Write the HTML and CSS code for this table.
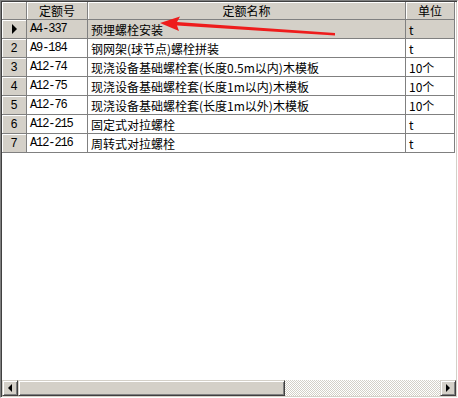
FILE: index.html
```html
<!DOCTYPE html>
<html>
<head>
  <meta charset="UTF-8">
  <title>定额列表</title>
  <link rel="stylesheet" href="styles.css">
</head>
<body>
  <div class="grid">
    <div class="grid-body">
      <table class="quota">
        <colgroup>
          <col class="c-ind">
          <col class="c-code">
          <col class="c-name">
          <col class="c-unit">
        </colgroup>
        <thead>
          <tr>
            <th class="ind"></th>
            <th>定额号</th>
            <th>定额名称</th>
            <th>单位</th>
          </tr>
        </thead>
        <tbody>
          <tr class="current">
            <td class="ind"><span class="pointer"></span></td>
            <td class="code">A4-337</td>
            <td>预埋螺栓安装</td>
            <td>t</td>
          </tr>
          <tr>
            <td class="ind">2</td>
            <td class="code">A9-184</td>
            <td>钢网架(球节点)螺栓拼装</td>
            <td>t</td>
          </tr>
          <tr>
            <td class="ind">3</td>
            <td class="code">A12-74</td>
            <td>现浇设备基础螺栓套(长度0.5m以内)木模板</td>
            <td>10个</td>
          </tr>
          <tr>
            <td class="ind">4</td>
            <td class="code">A12-75</td>
            <td>现浇设备基础螺栓套(长度1m以内)木模板</td>
            <td>10个</td>
          </tr>
          <tr>
            <td class="ind">5</td>
            <td class="code">A12-76</td>
            <td>现浇设备基础螺栓套(长度1m以外)木模板</td>
            <td>10个</td>
          </tr>
          <tr>
            <td class="ind">6</td>
            <td class="code">A12-215</td>
            <td>固定式对拉螺栓</td>
            <td>t</td>
          </tr>
          <tr>
            <td class="ind">7</td>
            <td class="code">A12-216</td>
            <td>周转式对拉螺栓</td>
            <td>t</td>
          </tr>
        </tbody>
      </table>
    </div>
    <div class="hscroll">
      <div class="sb-btn"><span class="tri-left"></span></div>
      <div class="sb-thumb"></div>
      <div class="sb-track"></div>
      <div class="sb-btn"><span class="tri-right"></span></div>
    </div>
  </div>

  <!-- red marker pointing at the current row -->
  <svg class="marker" width="458" height="398" viewBox="0 0 458 398">
    <polygon points="160,23 180,16.5 177,22 335,33 335,35.5 177,25.5 179,31" fill="#ee1c1c"/>
  </svg>
</body>
</html>
```

FILE: styles.css
```css
* {
  margin: 0;
  padding: 0;
  box-sizing: border-box;
}

body {
  width: 458px;
  height: 398px;
  background: #d4d0c8;
  font-family: "Noto Sans CJK SC", sans-serif;
  font-size: 12px;
  color: #000;
  position: relative;
}

.grid {
  width: 458px;
  height: 398px;
  display: flex;
  flex-direction: column;
  border-top: 1px solid #808080;
  border-left: 1px solid #808080;
  border-right: 1px solid #ffffff;
  border-bottom: 1px solid #ffffff;
  box-shadow: inset 1px 1px 0 #404040, inset -1px -1px 0 #d4d0c8;
  padding: 1px;
}

.grid-body {
  flex: 1;
  background: #fff;
  overflow: hidden;
}

.quota {
  border-collapse: separate;
  border-spacing: 0;
  table-layout: fixed;
  width: 453px;
}

.c-ind { width: 25px; }
.c-code { width: 61px; }
.c-name { width: 318px; }
.c-unit { width: 49px; }

.quota th,
.quota td {
  height: 19px;
  padding: 0 3px;
  border-right: 1px solid #808080;
  border-bottom: 1px solid #808080;
  white-space: nowrap;
  overflow: hidden;
  line-height: 17px;
  text-align: left;
  font-weight: normal;
}

.quota th {
  height: 18px;
  background: #d4d0c8;
  text-align: center;
  box-shadow: inset 1px 1px 0 #ffffff;
}

.quota td.ind {
  background: #d4d0c8;
  text-align: center;
  box-shadow: inset 1px 1px 0 #ffffff;
  font-family: "Liberation Sans", sans-serif;
  padding: 0;
}

.quota td.code {
  font-family: "Liberation Mono", monospace;
  letter-spacing: -1.1px;
  padding-left: 3px;
}

.quota tr.current td {
  background: #d4d0c8;
}

.pointer {
  display: inline-block;
  width: 0;
  height: 0;
  border-top: 5px solid transparent;
  border-bottom: 5px solid transparent;
  border-left: 5px solid #000;
  vertical-align: middle;
}

/* horizontal scrollbar */
.hscroll {
  height: 16px;
  display: flex;
}

.sb-btn {
  width: 16px;
  height: 16px;
  background: #d4d0c8;
  border-top: 1px solid #d4d0c8;
  border-left: 1px solid #d4d0c8;
  border-right: 1px solid #404040;
  border-bottom: 1px solid #404040;
  box-shadow: inset 1px 1px 0 #ffffff, inset -1px -1px 0 #808080;
  display: flex;
  align-items: center;
  justify-content: center;
}

.tri-left {
  border-top: 4px solid transparent;
  border-bottom: 4px solid transparent;
  border-right: 4px solid #000;
}

.tri-right {
  border-top: 4px solid transparent;
  border-bottom: 4px solid transparent;
  border-left: 4px solid #000;
}

.sb-thumb {
  width: 267px;
  background: #d4d0c8;
  border-top: 1px solid #d4d0c8;
  border-left: 1px solid #d4d0c8;
  border-right: 1px solid #404040;
  border-bottom: 1px solid #404040;
  box-shadow: inset 1px 1px 0 #ffffff, inset -1px -1px 0 #808080;
}

.sb-track {
  flex: 1;
  background: repeating-conic-gradient(#d4d0c8 0 25%, #ffffff 0 50%) 0 0 / 2px 2px;
}

.marker {
  position: absolute;
  left: 0;
  top: 0;
  pointer-events: none;
}
```
